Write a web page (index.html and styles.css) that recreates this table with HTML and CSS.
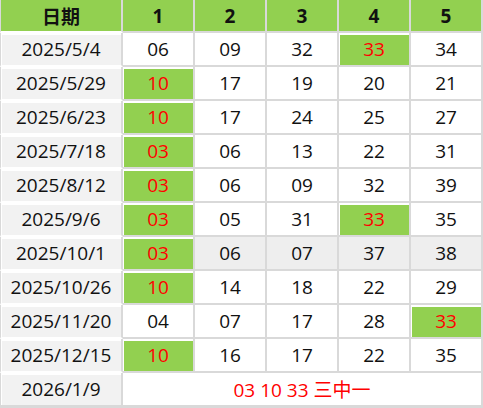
FILE: index.html
```html
<!DOCTYPE html>
<html>
<head>
<meta charset="utf-8">
<link rel="stylesheet" href="styles.css">
</head>
<body>
<div class="grid">
  <div class="c d h">日期</div><div class="c h">1</div><div class="c h">2</div><div class="c h">3</div><div class="c h">4</div><div class="c h">5</div>

  <div class="c d">2025/5/4</div><div class="c">06</div><div class="c">09</div><div class="c">32</div><div class="c hit">33</div><div class="c">34</div>
  <div class="c d">2025/5/29</div><div class="c hit">10</div><div class="c">17</div><div class="c">19</div><div class="c">20</div><div class="c">21</div>
  <div class="c d">2025/6/23</div><div class="c hit">10</div><div class="c">17</div><div class="c">24</div><div class="c">25</div><div class="c">27</div>
  <div class="c d">2025/7/18</div><div class="c hit">03</div><div class="c">06</div><div class="c">13</div><div class="c">22</div><div class="c">31</div>
  <div class="c d">2025/8/12</div><div class="c hit">03</div><div class="c">06</div><div class="c">09</div><div class="c">32</div><div class="c">39</div>
  <div class="c d">2025/9/6</div><div class="c hit">03</div><div class="c">05</div><div class="c">31</div><div class="c hit">33</div><div class="c">35</div>
  <div class="c d">2025/10/1</div><div class="c hit">03</div><div class="c g">06</div><div class="c g">07</div><div class="c g">37</div><div class="c g">38</div>
  <div class="c d">2025/10/26</div><div class="c hit">10</div><div class="c">14</div><div class="c">18</div><div class="c">22</div><div class="c">29</div>
  <div class="c d">2025/11/20</div><div class="c">04</div><div class="c">07</div><div class="c">17</div><div class="c">28</div><div class="c hit">33</div>
  <div class="c d">2025/12/15</div><div class="c hit">10</div><div class="c">16</div><div class="c">17</div><div class="c">22</div><div class="c">35</div>

  <div class="c d last">2026/1/9</div><div class="c last span">03 10 33 三中一</div>
</div>
</body>
</html>
```

FILE: styles.css
```css
html, body {
  margin: 0;
  padding: 0;
  background: #fff;
}
.grid {
  display: grid;
  grid-template-columns: 123px repeat(5, 72px);
  grid-template-rows: 33px repeat(10, 34px) 35px;
  width: 483px;
  font-family: "Open Sans", "Noto Sans CJK SC", sans-serif;
  font-size: 19px;
  color: #111;
}
.c {
  box-sizing: border-box;
  display: flex;
  align-items: center;
  justify-content: center;
  background: #fff;
  border-right: 2px solid #d9d9d9;
  border-bottom: 2px solid #d9d9d9;
  white-space: nowrap;
}
.d {
  border-left: 1px solid #d9d9d9;
  border-bottom-color: #fff;
  background: #f2f2f2;
  box-shadow: inset 1px 2px 0 0 #fff;
}
.h {
  background: #92d050;
  font-weight: bold;
  box-shadow: none;
}
.hit {
  background: #92d050;
  color: #ff0000;
  box-shadow: inset 1px 2px 0 0 #fff;
}
.g {
  background: #eeeeee;
}
.last {
  border-bottom: 3px solid #d9d9d9;
}
.span {
  grid-column: span 5;
  color: #ff0000;
}
```
